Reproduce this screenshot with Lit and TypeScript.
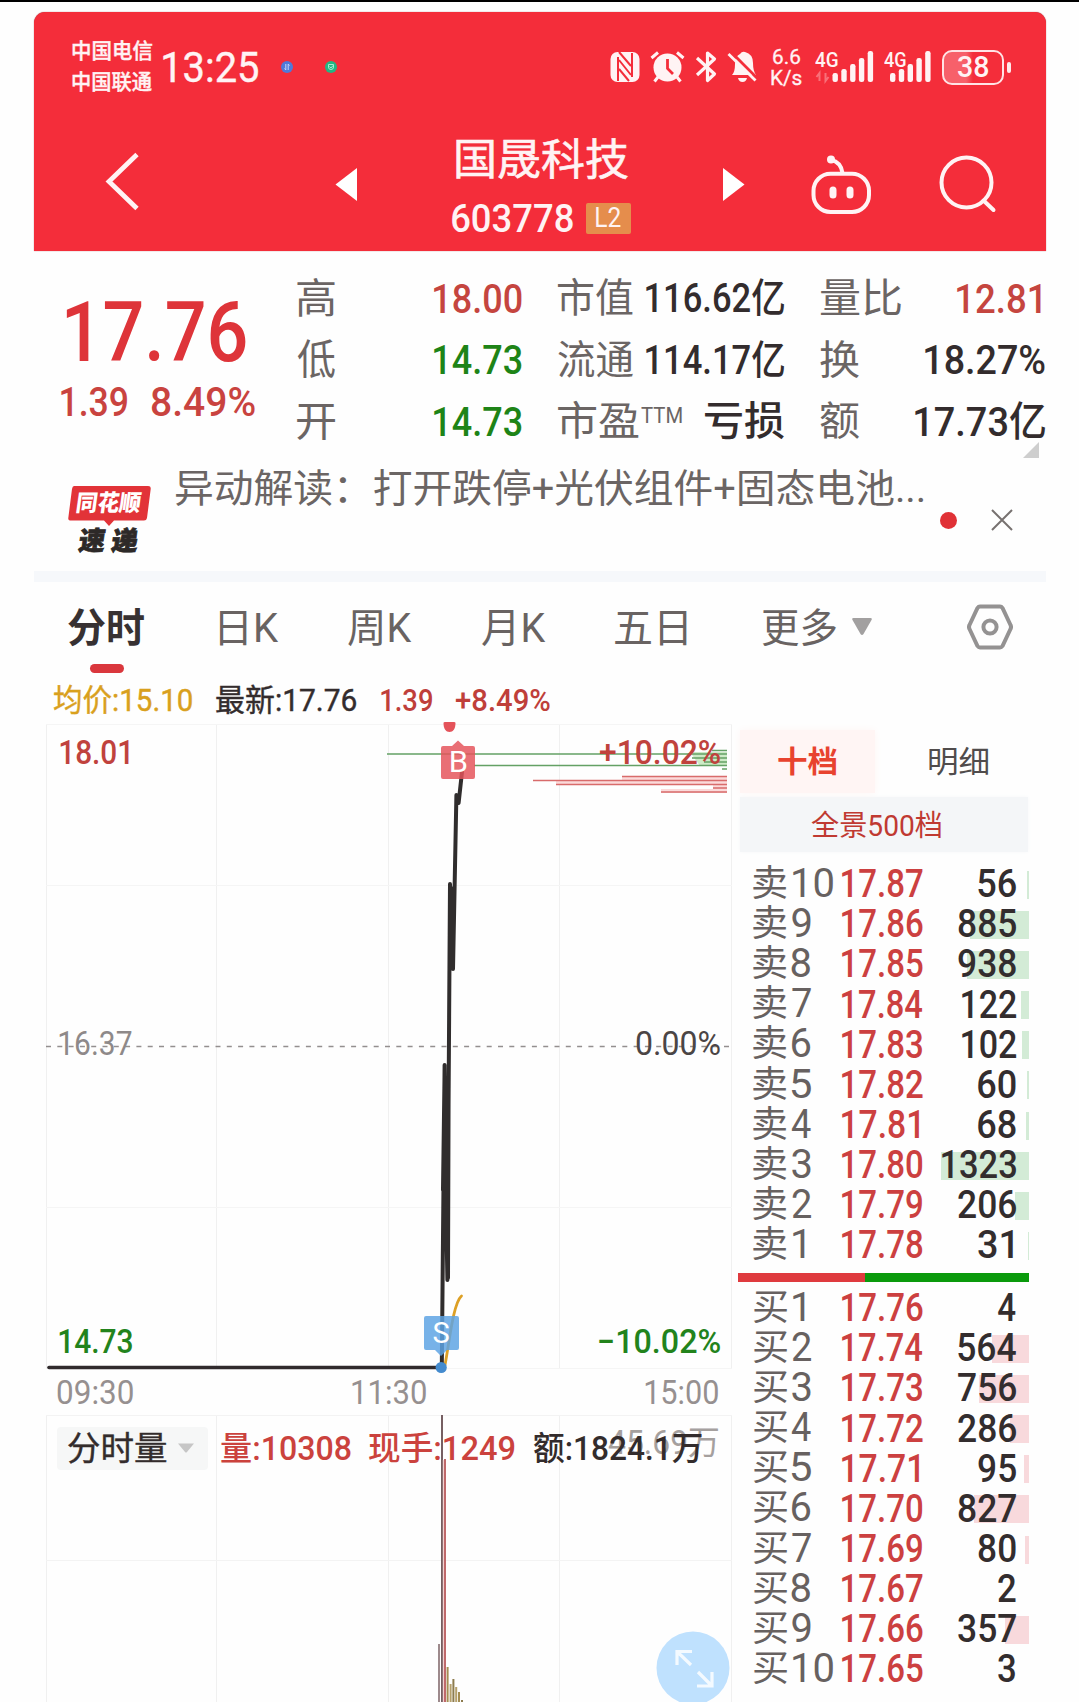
import { LitElement, html, css, svg, nothing } from "lit";
import { customElement, property, query } from "lit/decorators.js";

const measure = document.createElement("canvas").getContext("2d")!;

/** One line of text whose ink is condensed or widened to a given width. */
@customElement("fit-text")
class FitText extends LitElement {
  @property() text = "";
  @property({ type: Number }) w = 0;
  @property({ type: Number }) size = 16;
  @query("span") span!: HTMLElement;

  static styles = css`
    :host { display: block; flex: none; }
    span { display: block; white-space: pre; transform-origin: 0 50%; width: max-content; }
  `;

  updated() {
    const cs = getComputedStyle(this);
    measure.font = `${cs.fontWeight} ${this.size}px ${cs.fontFamily}`;
    const m = measure.measureText(this.text);
    const ink = m.actualBoundingBoxLeft + m.actualBoundingBoxRight;
    const k = this.w / ink;
    this.style.width = `${this.w}px`;
    this.style.height = `${this.size}px`;
    this.style.fontSize = `${this.size}px`;
    this.style.lineHeight = `${this.size}px`;
    this.span.style.transform = `translateX(${m.actualBoundingBoxLeft * k}px) scaleX(${k})`;
  }

  render() {
    return html`<span>${this.text}</span>`;
  }
}

const t = (text: string, w: number, size: number, cls = "") =>
  html`<fit-text class=${cls} .text=${text} .w=${w} .size=${size}></fit-text>`;

type Level = [name: string, price: string, qty: number];

const sells: Level[] = [
  ["10", "17.87", 56], ["9", "17.86", 885], ["8", "17.85", 938], ["7", "17.84", 122],
  ["6", "17.83", 102], ["5", "17.82", 60], ["4", "17.81", 68], ["3", "17.80", 1323],
  ["2", "17.79", 206], ["1", "17.78", 31],
];
const buys: Level[] = [
  ["1", "17.76", 4], ["2", "17.74", 564], ["3", "17.73", 756], ["4", "17.72", 286],
  ["5", "17.71", 95], ["6", "17.70", 827], ["7", "17.69", 80], ["8", "17.67", 2],
  ["9", "17.66", 357], ["10", "17.65", 3],
];

@customElement("order-book")
class OrderBook extends LitElement {
  static styles = css`
    :host { display: block; width: 291px; }
    .tabs { display: flex; height: 63px; margin-top: 7px; align-items: center; }
    .tab { height: 63px; display: flex; align-items: center; justify-content: center; }
    .tab.on { width: 135px; margin-left: 2px; background: #fff5f4; color: #e8432f; font-weight: 700; box-shadow: 0 0 8px #fff6f5; }
    .tab.off { width: 154px; padding-left: 13px; box-sizing: border-box; color: #504c4c; }
    .all { height: 55px; margin: 4px 1px 12px 2px; background: #f4f6f8; color: #c03a32; box-sizing: border-box;
      display: flex; align-items: center; justify-content: center; padding: 3px 17px 0 0; box-shadow: 0 0 4px #f7f8fa; }
    .row { position: relative; height: 40.1px; display: grid; align-items: center;
      grid-template-columns: 34px 54.5px 1fr auto; padding: 0 13px 0 15px; color: #676160; }
    .idx { padding-left: 4.5px; }
    .idx.one { padding-left: 6px; }
    .price { color: #cc4040; font-weight: 500; }
    .qty { color: #332d2e; font-weight: 500; }
    .qty.one { margin-right: 3px; }
    .bar { position: absolute; right: 0; top: 7px; height: 28px; }
    .sell .bar { background: #d3ebd6; }
    .buy .bar { background: #f8d9dc; }
    .ratio { display: flex; height: 9px; margin: 8px 0 6px; background: #0a9a0c; }
    .ratio-buy { width: 127px; background: #df3a3e; }
  `;

  level(label: string, [name, price, qty]: Level) {
    const q = String(qty);
    const ends1 = (s: string) => s.endsWith("1");
    const qw = q.length * 20.3 - 2.7 - (q[0] === "1" ? 4 : 0) - (ends1(q) ? 3 : 0);
    const bar = qty < 20 ? 0 : Math.max(1, qty * 0.0665 - (qty < 100 ? 1.8 : 0));
    return html`<div class="row">
      ${bar ? html`<div class="bar" style="width:${bar}px"></div>` : nothing}
      ${t(label, 34, 36)}
      <div class="idx ${name[0] === "1" ? "one" : ""}">${t(name, name === "10" ? 40.5 : name === "1" ? 12 : 19, 40)}</div>
      ${t(price, ends1(price) ? 77 : 80.5, 39.5, "price")}
      ${t(q, qw, 39.5, ends1(q) ? "qty one" : "qty")}
    </div>`;
  }

  render() {
    return html`
      <div class="tabs">
        <div class="tab on">${t("十档", 59, 30)}</div>
        <div class="tab off">${t("明细", 59, 30)}</div>
      </div>
      <div class="all">${t("全景500档", 130, 29)}</div>
      <div class="sell">${sells.map((l) => this.level("卖", l))}</div>
      <div class="ratio"><div class="ratio-buy"></div></div>
      <div class="buy">${buys.map((l) => this.level("买", l))}</div>
    `;
  }
}

@customElement("price-chart")
class PriceChart extends LitElement {
  static styles = css`
    :host { display: block; width: 686px; }
    .plot { position: relative; height: 646px; }
    .plot svg, .volume > svg { display: block; }
    .plot svg { overflow: visible; }
    .lab { position: absolute; font-weight: 500; }
    .tl { left: 14px; top: 12.5px; color: #c0423d; }
    .tr { right: 12px; top: 12.5px; color: #c0423d; }
    .ml { left: 13px; top: 303.5px; color: #8e8989; font-weight: 400; }
    .mr { right: 12px; top: 303.5px; color: #4b4545; font-weight: 400; }
    .bl { left: 13px; top: 601.5px; color: #22831c; }
    .br { right: 12px; top: 601.5px; color: #22831c; }
    .badge { position: absolute; color: #fff; }
    .b { left: 405px; top: 24.5px; }
    .s { left: 387.5px; top: 595.5px; }
    .axis { display: flex; justify-content: space-between; align-items: center; height: 46px; padding: 0 14px 0 11px; color: #969090; }
    .axis .mid { margin-left: -1px; }
    .volume { position: relative; height: 287px; }
    .info { position: absolute; left: 11px; top: 11px; height: 44px; display: flex; align-items: center; font-weight: 500; }
    .info fit-text { margin-top: 2px; }
    .pick { width: 140px; height: 43px; padding-left: 11px; margin-right: 13px; display: flex; align-items: center; gap: 10px;
      background: #f6f7f7; color: #332c2c; border-radius: 4px; font-weight: 400; -webkit-text-stroke: .4px #332c2c; }
    .red { color: #cb423d; margin-right: 18px; }
    .ink { color: #332c2c; margin-left: 1px; }
    .max { position: absolute; right: 14px; top: 11px; color: #a5a09e; }
    .full { position: absolute; left: 610px; top: 216px; }
  `;

  render() {
    const xs = [46.5, 216.5, 388.5, 559.5, 731.5];
    const bars: [number, number, string][] = [
      [439, 1644, "#9d8a8c"], [442, 1415, "#765f62"], [445, 1459, "#c0696b"], [447.6, 1667, "#a48d52"],
      [450.6, 1684, "#b5a06b"], [453.4, 1679, "#8d7c4e"], [456.2, 1687, "#b5a06b"], [459, 1692, "#a48d52"], [462, 1700, "#8d7c4e"],
    ];
    return html`
      <div class="plot">
        <svg width="686" height="646" viewBox="46 723 686 646" fill="none">
          <g stroke="#f0f0f0">
            ${xs.map((x) => svg`<path d="M${x} 724V1368" />`)}
            <path d="M46 724.5H732M46 885.5H732M46 1207.5H732M46 1368.5H732" stroke="#f5f5f5" />
          </g>
          <path d="M46 1046.5H729" stroke="#948f8f" stroke-width="1.4" stroke-dasharray="5 6.3" />
          <path d="M622 777H727V793H661V789H713V785H556V781H622Z" fill="#fbdada" />
          <path d="M690 752H727V766H700Z" fill="#cdeac6" />
          <g stroke-width="1.4">
            <path d="M387 754H727M474 765.5H727M712 750.5H727M692 758H727M704 762H727M722 769H727" stroke="#64a165" />
            <path d="M622 776.5H727M533 780.5H727M556 784.5H727M713 788H727M661 792H727" stroke="#d86b6b" />
          </g>
          <path d="M443.500 723Q443.500 722 445 722H454Q455.500 722 455.500 723C455.500 729 453 732 449.500 732S443.500 729 443.500 723Z" fill="#e4535a" />
          <path d="M445 1365C449 1345 453 1303 461.5 1296" stroke="#dda026" stroke-width="2.8" stroke-linecap="round" />
          <path d="M49 1367.5H441" stroke="#302a2c" stroke-width="3.6" stroke-linecap="round" />
          <path d="M441.8 1367L444.6 1065L446 1200L447.4 1280L450 884L453 969L456.4 795L458.6 803L462 772M446 1090L448 1278L448.6 1090M451 888L452.4 968M443 1190L444.6 1070"
            stroke="#302d2d" stroke-width="4" stroke-linecap="round" stroke-linejoin="round" />
          <path d="M443 746H452L458 740.500L464 746H473Q475 746 475 748V777Q475 779 473 779H443Q441 779 441 777V748Q441 746 443 746Z" fill="#e5535a" fill-opacity=".84" />
          <path d="M426 1316H457Q459 1316 459 1318V1348Q459 1350 457 1350H447L441 1356L435 1350H426Q424 1350 424 1348V1318Q424 1316 426 1316Z" fill="#5da3e4" fill-opacity=".84" />
          <circle cx="441.2" cy="1367.5" r="5.6" fill="#448bce" />
        </svg>
        ${t("18.01", 69, 33, "lab tl")}${t("+10.02%", 120, 33, "lab tr")}
        ${t("16.37", 73, 33, "lab ml")}${t("0.00%", 84, 33, "lab mr")}
        ${t("14.73", 73, 33, "lab bl")}${t("−10.02%", 121, 33, "lab br")}
        ${t("B", 16, 29, "badge b")}${t("S", 16, 29, "badge s")}
      </div>
      <div class="axis">
        ${t("09:30", 76, 33)}${t("11:30", 74, 33, "mid")}${t("15:00", 73, 33)}
      </div>
      <div class="volume">
        <svg width="686" height="287" viewBox="46 1415 686 287">
          <g stroke="#f0f0f0">
            ${xs.map((x) => svg`<path d="M${x} 1415V1702" />`)}
            <path d="M46 1415.5H732M46 1560.5H732" stroke="#f3f3f3" />
          </g>
          ${bars.map(([x, y, c]) => svg`<rect x=${x - 1} y=${y} width="2" height=${1702 - y} fill=${c} />`)}
          <path d="M443.3 1460V1702" stroke="#f0c9c9" stroke-width="1" />
        </svg>
        ${t("45.69万", 110, 33, "max")}
        <div class="info">
          <div class="pick">${t("分时量", 99, 32.5)}<svg width="18" height="10" viewBox="0 0 18 10"><path d="M1 .5H17L10 9Q9 10 8 9Z" fill="#c6c6c6" /></svg></div>
          ${t("量:10308", 130, 33.5, "red")}${t("现手:1249", 146, 33.5, "red")}${t("额:1824.1万", 168, 33.5, "ink")}
        </div>
        <svg class="full" width="74" height="74" viewBox="0 0 74 74" fill="none">
          <circle cx="37" cy="37" r="36.5" fill="#bfe1fe" />
          <path d="M21 34V20.500H36M21 20.500L35 34M42 41L56 55M56 41V55H41" stroke="#f4faff" stroke-width="3.2" />
        </svg>
      </div>
    `;
  }
}

@customElement("app-root")
class AppRoot extends LitElement {
  static styles = css`
    :host { display: block; box-sizing: border-box; width: 1079px; height: 1702px; overflow: hidden; background: #fefefe;
      border-top: 2px solid #000; padding-top: 10px; font-family: Roboto, "Noto Sans CJK SC", sans-serif; }
    svg { display: block; flex: none; }
    header { box-sizing: border-box; width: 1012px; height: 239px; margin-left: 34px; border-radius: 11px 11px 0 0;
      background: #f42d3a; color: #fff3f4; box-shadow: 0 0 1px #8b3038; }
    .status { display: flex; align-items: center; height: 110px; padding-left: 38px; }
    .carriers { display: grid; gap: 10px; margin-right: 11px; font-weight: 500; -webkit-text-stroke: .4px #fff3f4; }
    .time { margin: 2px 23px 0 0; -webkit-text-stroke: .4px #fff3f4; }
    .apps { display: flex; gap: 32px; margin-right: 273px; }
    .sys { display: flex; gap: 10px; align-items: center; }
    .speed { display: grid; justify-items: center; margin: 0 2px 0 4px; -webkit-text-stroke: .3px #fff3f4; }
    .signal { position: relative; margin-right: -1px; }
    .signal fit-text { position: absolute; left: 1px; top: 2px; font-weight: 500; }
    .battery { display: flex; align-items: center; gap: 3px; margin-left: 1px; }
    .cell { box-sizing: border-box; width: 62px; height: 35px; border: 2.5px solid #ffe3e5; border-radius: 10px; display: flex;
      align-items: center; justify-content: center; font-weight: 500; background: linear-gradient(90deg, #f7606a 38%, transparent 50%); }
    .nub { width: 4px; height: 11px; border-radius: 2px; background: #ffe9ea; }
    .nav { display: grid; align-items: start; padding-left: 70px;
      grid-template-columns: 230px 117.500px 270.500px 89px 127px 60px; }
    .title { display: grid; gap: 17px; padding-top: 17px; }
    .name { margin-left: 4px; -webkit-text-stroke: .6px #fff3f4; }
    .code { display: flex; gap: 13px; align-items: center; font-weight: 500; }
    .l2 { width: 45px; height: 31px; border-radius: 2px; background: #e58d4c; display: flex; align-items: center; justify-content: center; font-weight: 400; margin-top: -1px; }
    .quote { position: relative; display: grid; grid-template-columns: 195px 225px 226px 225px; column-gap: 36px;
      margin-left: 66px; height: 201px; }
    .last { padding-top: 40px; color: #de3439; font-weight: 500; }
    .change { display: flex; gap: 25px; margin: 7px 0 0 -5px; color: #c9433f; }
    .stats { padding-top: 17.500px; color: #6b6564; }
    .stat { display: flex; justify-content: space-between; align-items: center; height: 61.500px; }
    .label { display: flex; gap: 2px; align-items: center; }
    .ttm { margin-top: -12px; }
    .v { font-weight: 500; color: #332c2d; }
    .up { color: #c5453f; }
    .end { margin-right: 4px; }
    .down { color: #1e8417; }
    .fold { position: absolute; left: 957px; top: 191px; }
    .news { display: flex; height: 119px; margin-left: 68px; color: #6b6564; }
    .logo { position: relative; width: 83px; height: 68px; margin: 34px 25px 0 0; }
    .logo-a, .logo-b { position: absolute; font-weight: 900; transform: skewX(-8deg); }
    .logo-a { left: 9px; top: 6px; color: #fff; }
    .logo-b { left: 11px; top: 42px; color: #2d2928; -webkit-text-stroke: .8px #2d2928; }
    .headline { margin-top: 18px; }
    .dot { width: 17px; height: 17px; border-radius: 50%; background: #e03136; margin: 60px 34px 0 16px; }
    .close { margin-top: 57px; }
    .rule { width: 1012px; height: 11px; margin-left: 34px; background: #f6f8fb; }
    .tabs { display: grid; grid-template-columns: 152px 128px 134px 133px 147px 90px 115px 46px; align-items: center; height: 90px; margin-left: 68px; color: #696362; }
    .tabs fit-text { margin-top: 3px; }
    .tab.on { position: relative; color: #373132; font-weight: 700; }
    .tab.on::after { content: ""; position: absolute; left: 22px; top: 58px; width: 34px; height: 9px; border-radius: 5px; background: #da373d; }
    .summary { display: flex; align-items: center; height: 46px; padding: 0 0 0 54px; margin: 5px 0 0; box-sizing: border-box; gap: 24px; color: #bf3f3a; font-weight: 500; }
    .avg { color: #d9a01d; font-weight: 400; -webkit-text-stroke: .4px #d9a01d; }
    .latest { color: #332c2d; font-weight: 400; -webkit-text-stroke: .4px #332c2d; margin-right: 1px; }
    .main { display: flex; gap: 6px; margin-left: 46px; }
  `;

  bars(x0: number, hs: number[]) {
    return hs.map((h, i) => svg`<rect x=${x0 + i * 8.8} y=${82 - h} width="5.4" height=${h} rx="2.300" fill="#fff3f4" />`);
  }

  stat(label: unknown, value: unknown) {
    return html`<div class="stat"><div class="label">${label}</div>${value}</div>`;
  }

  render() {
    return html`
      <header>
        <div class="status">
          <div class="carriers">${t("中国电信", 80, 21)}${t("中国联通", 80, 21)}</div>
          ${t("13:25", 95, 42, "time")}
          <div class="apps">
            <svg width="12" height="12" viewBox="0 0 12 12"><circle cx="6" cy="6" r="6" fill="#5079d8" /><path d="M4.800 3V9L3.500 7.500M7.200 9V3L8.500 4.500" stroke="#c8d6f8" fill="none" /></svg>
            <svg width="12" height="12" viewBox="0 0 12 12"><circle cx="6" cy="6" r="6" fill="#22b683" /><path d="M3.500 3.500H8.500V6Q8.500 8.500 6 8.500Q3.500 8.500 3.500 6ZM4.500 5.500L6 7L8 4.500" stroke="#a5ecd2" fill="none" /></svg>
          </div>
          <div class="sys">
            <svg width="30" height="42" viewBox="609 46 30 42">
              <rect x="609.500" y="52" width="29" height="30" rx="7" fill="#fff3f4" />
              <path d="M617 81V57M631 53V77M618 52L630 66M618 60L630 75M618 69L628 81" fill="none" stroke="#f42d3a" stroke-width="2" />
            </svg>
            <svg width="35" height="42" viewBox="649 46 35 42" fill="none" stroke="#fff3f4">
              <circle cx="666.500" cy="67.500" r="14" fill="#fff3f4" stroke="none" />
              <path d="M650.500 58L657 52.500M682.500 58L676 52.500M657 77L653.500 81.500M676 77L679.500 81.500" stroke-width="3" />
              <path d="M666.500 59V68.500L672 74" stroke="#f42d3a" stroke-width="2.800" />
            </svg>
            <svg width="22" height="42" viewBox="694 46 22 42" fill="none" stroke="#fff3f4" stroke-width="3.200">
              <path d="M696 58L713.500 74L706.500 80.500V53L713.500 59L696 75" stroke-linejoin="round" />
            </svg>
            <svg width="30" height="42" viewBox="726 46 30 42">
              <path d="M731 75Q734 72 734 64Q734 56 739 54Q741 51 744 52Q752 54 752 63Q752 71 755 75Z" fill="#fff3f4" />
              <path d="M737 78H746Q745 82 741.500 82Q738 82 737 78Z" fill="#fff3f4" />
              <path d="M730 52L757 79" stroke="#f42d3a" stroke-width="3" />
              <path d="M727.500 54L754.500 80.500" stroke="#fff3f4" stroke-width="2.800" />
            </svg>
            <div class="speed">${t("6.6", 27, 21)}${t("K/s", 31, 20)}</div>
            <div class="signal">
              <svg width="60" height="38" viewBox="814 48 60 38">
                <path d="M819.500 81V73L816.500 77M825.500 73V81L828.500 77" stroke="#f87079" stroke-width="2" fill="none" />
                ${this.bars(832.5, [9, 13, 18, 24, 31])}
              </svg>
              ${t("4G", 23, 20)}
            </div>
            <div class="signal">
              <svg width="49" height="38" viewBox="884 48 49 38">${this.bars(891, [9, 13, 18, 24, 31])}</svg>
              ${t("4G", 22, 20)}
            </div>
            <div class="battery"><div class="cell">${t("38", 31, 29)}</div><div class="nub"></div></div>
          </div>
        </div>
        <div class="nav">
          <svg width="38" height="100" viewBox="104 122 38 100" fill="none"><path d="M137 154.500L109 181.500L137 208.500" stroke="#fff3f4" stroke-width="4.800" /></svg>
          <svg width="24" height="100" viewBox="334 122 24 100"><path d="M357 168V201L335.500 184.500Z" fill="#fff" /></svg>
          <div class="title">
            ${t("国晟科技", 172, 43, "name")}
            <div class="code">${t("603778", 121, 39.5)}<div class="l2">${t("L2", 25, 27)}</div></div>
          </div>
          <svg width="24" height="100" viewBox="722 122 24 100"><path d="M723 168V201L744.500 184.500Z" fill="#fff" /></svg>
          <svg width="62" height="100" viewBox="811 122 62 100" fill="none" stroke="#fff3f4" stroke-width="4">
            <rect x="813.500" y="173.800" width="55.500" height="38.200" rx="17" />
            <path d="M831 160Q841 162 842.500 173" /><circle cx="831" cy="159.500" r="4" fill="#fff3f4" stroke="none" />
            <path d="M833 190V195M850 190V195" stroke-width="7" stroke-linecap="round" />
          </svg>
          <svg width="60" height="100" viewBox="938 122 60 100" fill="none" stroke="#fff3f4" stroke-width="4">
            <circle cx="966.500" cy="182.500" r="25" /><path d="M983.500 200.500L993.500 210" stroke-linecap="round" />
          </svg>
        </div>
      </header>

      <section class="quote">
        <div class="last">
          ${t("17.76", 180, 84)}
          <div class="change">${t("1.39", 66, 41)}${t("8.49%", 103, 41)}</div>
        </div>
        <div class="stats">
          ${this.stat(t("高", 38, 41), t("18.00", 88, 41, "v up"))}
          ${this.stat(t("低", 38, 41), t("14.73", 88, 41, "v down"))}
          ${this.stat(t("开", 38, 41), t("14.73", 88, 41, "v down"))}
        </div>
        <div class="stats">
          ${this.stat(t("市值", 75, 40), t("116.62亿", 138, 40, "v"))}
          ${this.stat(t("流通", 75, 40), t("114.17亿", 138, 40, "v"))}
          ${this.stat(html`${t("市盈", 81, 40)}${t("TTM", 41, 22, "ttm")}`, t("亏损", 80, 40, "v"))}
        </div>
        <div class="stats">
          ${this.stat(t("量比", 81, 40), t("12.81", 84, 41, "v up end"))}
          ${this.stat(t("换", 39, 40), t("18.27%", 120, 41, "v"))}
          ${this.stat(t("额", 39, 40), t("17.73亿", 130, 41, "v"))}
        </div>
        <svg class="fold" width="16" height="16" viewBox="0 0 16 16"><path d="M16 0V16H0Z" fill="#cecece" /></svg>
      </section>

      <section class="news">
        <div class="logo">
          <svg width="83" height="68" viewBox="0 0 83 68"><path d="M6 0H80Q83 0 82.700 3L79 32Q78.500 34.500 76 34.500H46L41 40L36 34.500H3Q0 34.500 .300 32L4 3Q4.500 0 6 0Z" fill="#e23338" /></svg>
          ${t("同花顺", 64, 23, "logo-a")}
          ${t("速 递", 59, 26, "logo-b")}
        </div>
        ${t("异动解读：打开跌停+光伏组件+固态电池...", 748, 39, "headline")}
        <div class="dot"></div>
        <svg class="close" width="22" height="22" viewBox="0 0 22 22"><path d="M1 1L21 21M21 1L1 21" stroke="#777170" stroke-width="2" /></svg>
      </section>

      <div class="rule"></div>

      <nav class="tabs">
        <div class="tab on">${t("分时", 76, 40)}</div>
        ${t("日K", 59, 40)}${t("周K", 64, 40)}${t("月K", 64, 40)}${t("五日", 72, 40)}${t("更多", 74, 40)}
        <svg width="20" height="18" viewBox="0 0 20 18"><path d="M1.500 0H18.500Q20.500 0 19.500 2L11.500 16Q10 18 8.500 16L.500 2Q-.500 0 1.500 0Z" fill="#a2a0a0" /></svg>
        <svg width="46" height="46" viewBox="0 0 46 46" fill="none" stroke="#949292" stroke-width="4">
          <path d="M13 2.500H33Q34.500 2.500 35.500 4L43.500 21Q44.500 23 43.500 25L35.500 42Q34.500 43.500 33 43.500H13Q11.500 43.500 10.500 42L2.500 25Q1.500 23 2.500 21L10.500 4Q11.500 2.500 13 2.500Z" />
          <circle cx="23" cy="23" r="6.600" />
        </svg>
      </nav>

      <div class="summary">
        ${t("均价:15.10", 138, 31, "avg")}${t("最新:17.76", 140, 31, "latest")}${t("1.39", 51, 31)}${t("+8.49%", 94, 31)}
      </div>

      <div class="main">
        <price-chart></price-chart>
        <order-book></order-book>
      </div>
    `;
  }
}
